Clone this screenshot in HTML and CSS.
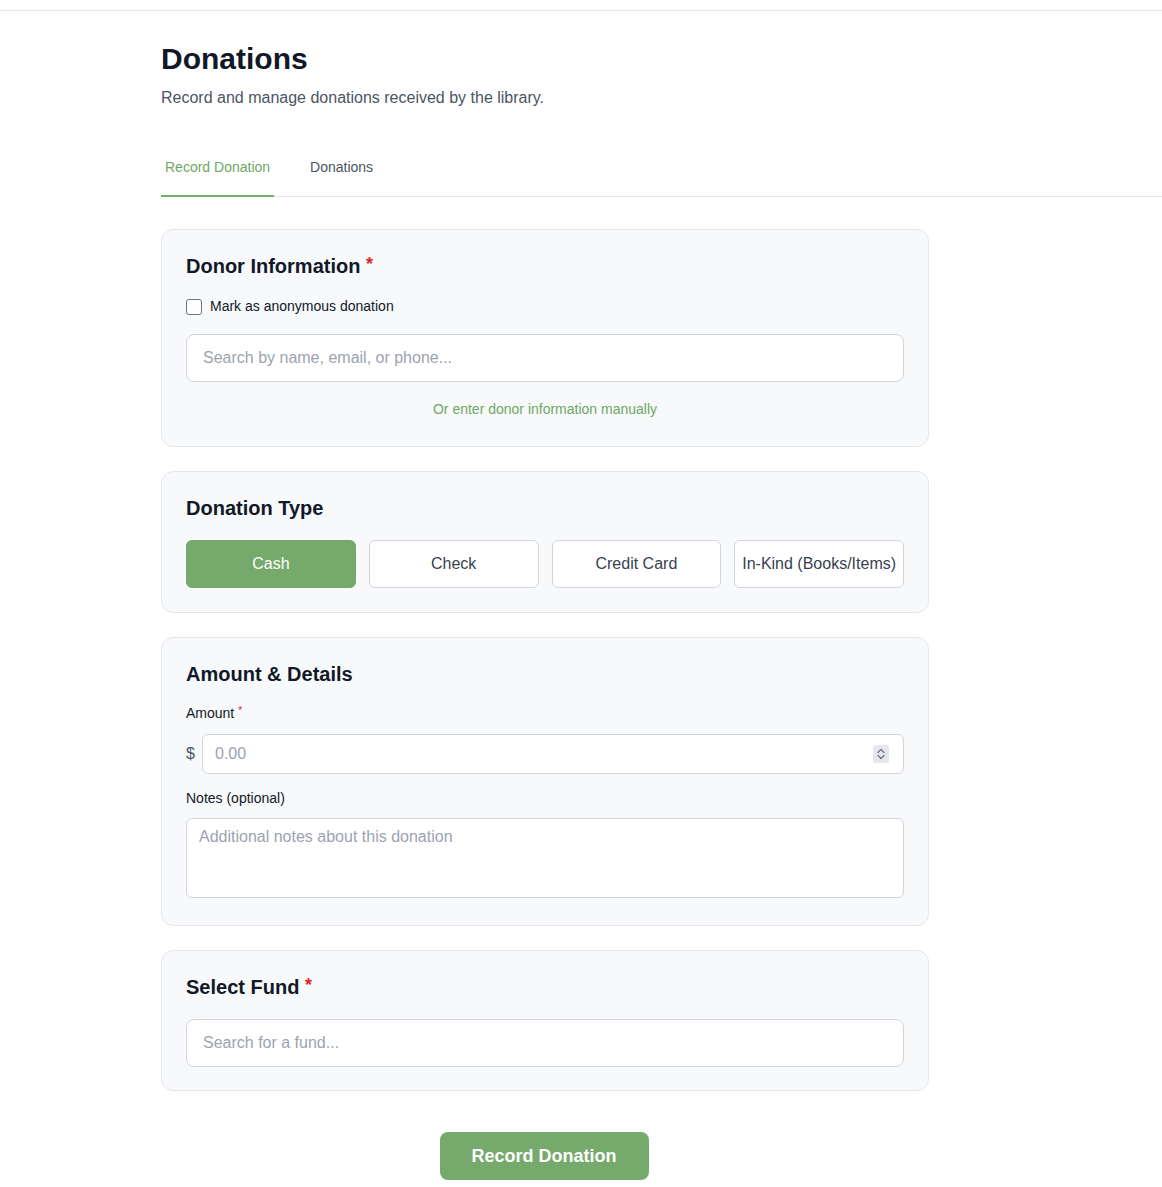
FILE: index.html
```html
<!DOCTYPE html>
<html lang="en">
<head>
<meta charset="utf-8">
<title>Donations</title>
<link rel="stylesheet" href="styles.css">
</head>
<body>
<div class="topbar"></div>
<main class="page">
  <h1 class="title">Donations</h1>
  <p class="subtitle">Record and manage donations received by the library.</p>
  <nav class="tabs">
    <a class="tab active">Record Donation</a>
    <a class="tab">Donations</a>
  </nav>

  <div class="form">
    <section class="card donor">
      <h2 class="card-title">Donor Information <span class="req">*</span></h2>
      <label class="check-row"><input type="checkbox" class="checkbox"><span>Mark as anonymous donation</span></label>
      <div class="input lg"><span class="ph">Search by name, email, or phone...</span></div>
      <p class="manual-link">Or enter donor information manually</p>
    </section>

    <section class="card">
      <h2 class="card-title">Donation Type</h2>
      <div class="type-grid">
        <button class="type-btn selected">Cash</button>
        <button class="type-btn">Check</button>
        <button class="type-btn">Credit Card</button>
        <button class="type-btn">In-Kind (Books/Items)</button>
      </div>
    </section>

    <section class="card details">
      <h2 class="card-title">Amount &amp; Details</h2>
      <div class="field-label first">Amount <span class="req-sm">*</span></div>
      <div class="amount-row">
        <span class="currency">$</span>
        <div class="input amount"><span class="ph">0.00</span>
          <svg class="spinner" width="16" height="18" viewBox="0 0 16 18">
            <rect x="0" y="0" width="16" height="18" rx="2" fill="#e5e7eb"/>
            <path d="M5 7.5 L8 4.5 L11 7.5" fill="none" stroke="#6b7280" stroke-width="1.2" stroke-linecap="round" stroke-linejoin="round"/>
            <path d="M5 10.5 L8 13.5 L11 10.5" fill="none" stroke="#6b7280" stroke-width="1.2" stroke-linecap="round" stroke-linejoin="round"/>
          </svg>
        </div>
      </div>
      <div class="field-label">Notes (optional)</div>
      <div class="textarea"><span class="ph">Additional notes about this donation</span></div>
    </section>

    <section class="card fund-card">
      <h2 class="card-title">Select Fund <span class="req">*</span></h2>
      <div class="input lg fund"><span class="ph">Search for a fund...</span></div>
    </section>

    <div class="submit-wrap">
      <button class="submit">Record Donation</button>
    </div>
  </div>
</main>
</body>
</html>
```

FILE: styles.css
```css
* { box-sizing: border-box; }
html, body { margin: 0; padding: 0; background: #ffffff; }
body {
  font-family: "Liberation Sans", Arial, Helvetica, sans-serif;
  color: #111827;
}
.topbar {
  height: 11px;
  border-bottom: 1px solid #e5e7eb;
}
.page {
  padding: 30px 0 40px 161px;
}
.title {
  margin: 0;
  font-size: 30px;
  line-height: 36px;
  font-weight: 700;
  color: #111827;
}
.subtitle {
  margin: 9px 0 0;
  font-size: 16px;
  line-height: 24px;
  color: #4b5563;
}
.tabs {
  margin-top: 31px;
  display: flex;
  border-bottom: 1px solid #e5e7eb;
}
.tab {
  display: block;
  padding: 16px 4px 18px;
  font-size: 14px;
  line-height: 20px;
  color: #4b5563;
  border-bottom: 2px solid transparent;
  margin-bottom: -1px;
}
.tab + .tab { margin-left: 32px; }
.tab.active {
  color: #6ea863;
  border-bottom-color: #76a96c;
}
.form {
  width: 768px;
  margin-top: 32px;
  display: flex;
  flex-direction: column;
  gap: 24px;
}
.card {
  background: #f8f9fb;
  border: 1px solid #e5e7eb;
  border-radius: 12px;
  padding: 24px;
}
.card-title {
  margin: 0;
  height: 24px;
  font-size: 20px;
  line-height: 24px;
  font-weight: 700;
  color: #111827;
}
.req {
  color: #dc2626;
  font-size: 18px;
  line-height: 0;
  position: relative;
  top: -3px;
}
.req-sm {
  color: #dc2626;
  font-size: 10px;
  line-height: 0;
  position: relative;
  top: -4px;
}
.check-row {
  margin-top: 18px;
  display: flex;
  align-items: center;
  gap: 8px;
  font-size: 14px;
  line-height: 20px;
  color: #111827;
}
.checkbox {
  appearance: none;
  -webkit-appearance: none;
  margin: 0;
  width: 16px;
  height: 16px;
  border: 1px solid #6b7280;
  border-radius: 3px;
  background: #ffffff;
  position: relative;
  top: 1px;
}
.input {
  background: #ffffff;
  border: 1px solid #d1d5db;
  border-radius: 8px;
  display: flex;
  align-items: center;
  font-size: 16px;
  line-height: 24px;
}
.input.lg {
  height: 48px;
  margin-top: 18px;
  padding: 0 16px;
}
.input.fund { margin-top: 20px; }
.ph { color: #9ca3af; }
.manual-link {
  margin: 17px 0 0;
  text-align: center;
  font-size: 14px;
  line-height: 20px;
  color: #6ea863;
}
.card.donor { padding-bottom: 27px; }
.type-grid {
  margin-top: 20px;
  display: grid;
  grid-template-columns: repeat(4, 1fr);
  gap: 13px;
}
.type-btn {
  height: 48px;
  border: 1px solid #d1d5db;
  border-radius: 6px;
  background: #ffffff;
  font-family: inherit;
  font-size: 16px;
  color: #374151;
  padding: 0;
}
.type-btn.selected {
  background: #76a96c;
  border-color: #76a96c;
  color: #ffffff;
}
.field-label {
  margin-top: 14px;
  font-size: 14px;
  line-height: 20px;
  color: #111827;
}
.field-label.first { margin-top: 17px; }
.amount-row {
  margin-top: 11px;
  display: flex;
  align-items: center;
  gap: 7px;
}
.currency {
  font-size: 16px;
  color: #4b5563;
}
.input.amount {
  flex: 1;
  height: 40px;
  padding: 0 14px 0 12px;
  border-radius: 6px;
  justify-content: space-between;
}
.spinner { display: block; }
.textarea {
  margin-top: 10px;
  height: 80px;
  background: #ffffff;
  border: 1px solid #d1d5db;
  border-radius: 6px;
  padding: 8px 12px;
  font-size: 16px;
  line-height: 20px;
}
.card.details { padding-bottom: 27px; }
.card.fund-card { padding-bottom: 23px; }
.submit-wrap {
  margin-top: 17px;
  display: flex;
  justify-content: center;
}
.submit {
  width: 209px;
  height: 48px;
  border: none;
  border-radius: 8px;
  background: #76a96c;
  color: #ffffff;
  font-family: inherit;
  font-size: 18px;
  font-weight: 700;
  position: relative;
  left: -1px;
}
```
